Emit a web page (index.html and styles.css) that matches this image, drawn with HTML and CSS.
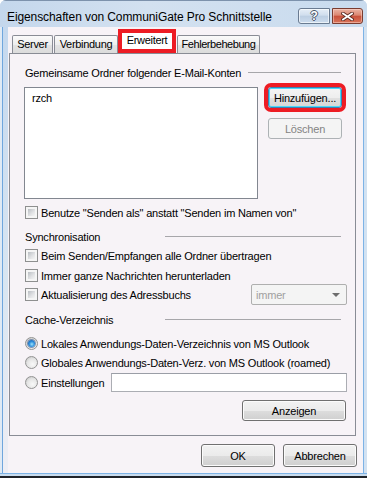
FILE: index.html
```html
<!DOCTYPE html>
<html>
<head>
<meta charset="utf-8">
<title>Eigenschaften</title>
<link rel="stylesheet" href="styles.css">
</head>
<body>
<div class="window">
  <div class="titlebar">
    <div class="title">Eigenschaften von CommuniGate Pro Schnittstelle</div>
    <div class="caption">
      <div class="cap help"><span class="qm">?</span></div>
      <div class="cap close">
        <svg width="13" height="9" viewBox="0 0 13 9">
          <path d="M2 1.5 L11 7.5 M11 1.5 L2 7.5" stroke="#5a2a22" stroke-width="3.6" stroke-linecap="square" fill="none"/>
          <path d="M2 1.5 L11 7.5 M11 1.5 L2 7.5" stroke="#ffffff" stroke-width="1.8" stroke-linecap="square" fill="none"/>
        </svg>
      </div>
    </div>
  </div>
  <div class="middle">
    <div class="lframe"></div>
    <div class="client">
      <div class="tabs">
        <div class="tab t-server">Server</div>
        <div class="tab t-verb">Verbindung</div>
        <div class="tab active">Erweitert</div>
        <div class="tab t-fehler">Fehlerbehebung</div>
      </div>
      <div class="panel">
        <div class="group g1"><span class="glabel">Gemeinsame Ordner folgender E-Mail-Konten</span><span class="gline"></span></div>
        <div class="listrow">
          <div class="listbox"><div class="item">rzch</div></div>
          <div class="sidebtns">
            <button class="btn focus">Hinzufügen...</button>
            <button class="btn disabled">Löschen</button>
          </div>
        </div>
        <div class="row r-benutze"><span class="cb"></span><span>Benutze "Senden als" anstatt "Senden im Namen von"</span></div>
        <div class="group g-sync"><span class="glabel fixed">Synchronisation</span><span class="gline"></span></div>
        <div class="row r-c1"><span class="cb"></span><span>Beim Senden/Empfangen alle Ordner übertragen</span></div>
        <div class="row r-c2"><span class="cb"></span><span>Immer ganze Nachrichten herunterladen</span></div>
        <div class="row r-c3"><span class="cb"></span><span class="grow">Aktualisierung des Adressbuchs</span>
          <div class="combo"><span>immer</span><span class="arrow"></span></div>
        </div>
        <div class="group g-cache"><span class="glabel fixed">Cache-Verzeichnis</span><span class="gline"></span></div>
        <div class="row r-r1"><span class="rb checked"></span><span>Lokales Anwendungs-Daten-Verzeichnis von MS Outlook</span></div>
        <div class="row r-r2"><span class="rb"></span><span>Globales Anwendungs-Daten-Verz. von MS Outlook (roamed)</span></div>
        <div class="row r-r3"><span class="rb"></span><span class="einst">Einstellungen</span><div class="textbox"></div></div>
        <div class="row r-show"><button class="btn anzeigen">Anzeigen</button></div>
      </div>
      <div class="footer">
        <button class="btn fbtn">OK</button>
        <button class="btn fbtn">Abbrechen</button>
      </div>
    </div>
    <div class="rframe"></div>
  </div>
  <div class="bframe"></div>
</div>
</body>
</html>
```
FILE: styles.css
```css
html, body {
  margin: 0;
  padding: 0;
  background: #ffffff;
}
body {
  font-family: "Liberation Sans", Arial, sans-serif;
  font-size: 11px;
  letter-spacing: -0.2px;
  color: #000;
}
.window {
  width: 367px;
  height: 478px;
  display: flex;
  flex-direction: column;
  box-sizing: border-box;
  background: #c9dbee;
  border-radius: 6px 6px 0 0;
  overflow: hidden;
}
.titlebar {
  height: 27px;
  flex: none;
  display: flex;
  justify-content: space-between;
  background: linear-gradient(90deg, #c4d7ec 0%, #d3e1f0 40%, #c9dbee 100%);
  border-top: 1px solid #7d92ac;
  box-sizing: border-box;
}
.title {
  font-size: 12px;
  letter-spacing: -0.1px;
  padding: 9px 0 0 7px;
  line-height: 14px;
}
.caption {
  display: flex;
  gap: 2px;
  padding-top: 7px;
  padding-right: 4px;
}
.cap {
  box-sizing: border-box;
  height: 16px;
  border: 1px solid #6a7b91;
  display: flex;
  align-items: center;
  justify-content: center;
}
.help {
  width: 32px;
  border-radius: 3px 0 0 3px;
  background: linear-gradient(#e6eef7 0%, #d0dded 45%, #bccee2 50%, #cddcee 100%);
  box-shadow: inset 0 0 0 1px rgba(255,255,255,0.6);
}
.qm {
  font-family: "Liberation Sans", Arial, sans-serif;
  font-weight: bold;
  font-size: 12px;
  color: #fff;
  text-shadow: -1px 0 0 #4a5668, 1px 0 0 #4a5668, 0 -1px 0 #4a5668, 0 1px 0 #4a5668;
  line-height: 12px;
}
.close {
  width: 31px;
  border-color: #7a3c30;
  border-radius: 0 3px 3px 0;
  background: linear-gradient(#eab3a4 0%, #db8670 45%, #c8503a 50%, #d9745a 100%);
  box-shadow: inset 0 0 0 1px rgba(255,220,210,0.5);
}
.middle {
  flex: 1;
  display: flex;
  min-height: 0;
}
.lframe {
  width: 8px;
  flex: none;
  box-sizing: border-box;
  border-left: 2px solid #dfeaf5;
  background: linear-gradient(#c4d8ee, #d9e6f2 60%, #eeeef4 100%);
  box-shadow: inset 1px 0 0 #6fa6dd;
}
.rframe {
  width: 4px;
  flex: none;
  background: linear-gradient(90deg, #7db3e6 0 1px, #d2e2f2 1px);
}
.bframe {
  height: 5px;
  flex: none;
  background: linear-gradient(#7db3e6 0 1px, #c8dcef 1px 3px, #20242a 3px);
}
.client {
  flex: 1;
  background: #f7f3f7;
  display: flex;
  flex-direction: column;
  padding: 2px 0 0 1px;
  box-sizing: border-box;
}
.tabs {
  height: 24px;
  display: flex;
  align-items: flex-end;
  padding-left: 3px;
}
.tab {
  box-sizing: border-box;
  height: 18px;
  padding: 0;
  text-align: center;
  letter-spacing: -0.3px;
  border: 1px solid #898c95;
  border-bottom: none;
  border-radius: 2px 2px 0 0;
  background: linear-gradient(#fafafa 0%, #eeeeee 50%, #e3e3e3 51%, #dcdcdc 100%);
  line-height: 17px;
}
.t-server { width: 41px; }
.t-verb { width: 64px; margin-left: 1px; }
.t-fehler { width: 83px; margin-left: 1px; letter-spacing: -0.45px; }
.tab.active {
  width: 58px;
  height: 24px;
  border: 4px solid #ed1c24;
  border-radius: 0;
  background: #ffffff;
  line-height: 14px;
  margin-left: 0;
}
.panel {
  width: 347px;
  height: 383px;
  box-sizing: border-box;
  border: 1px solid #898c95;
  padding: 0 11px 0 15px;
  display: flex;
  flex-direction: column;
}
.group {
  height: 17px;
  display: flex;
  align-items: center;
}
.glabel.fixed {
  width: 140px;
  flex: none;
}
.gline {
  flex: 1;
  height: 1px;
  background: #a7a6aa;
  margin-right: 3px;
}
.g1 { margin-top: 10px; }
.g1 .gline { margin-left: 7px; }
.listrow {
  margin-top: 6px;
  display: flex;
  gap: 10px;
}
.listbox {
  width: 234px;
  height: 112px;
  box-sizing: border-box;
  margin-left: -1px;
  border: 1px solid #828790;
  background: #ffffff;
  padding: 3px 0 0 7px;
}
.item { line-height: 14px; }
.sidebtns {
  display: flex;
  flex-direction: column;
  gap: 10px;
}
.btn {
  font-family: "Liberation Sans", Arial, sans-serif;
  font-size: 11px;
  letter-spacing: -0.2px;
  color: #000;
  box-sizing: border-box;
  width: 74px;
  height: 21px;
  padding: 0;
  border: 1px solid #707070;
  border-radius: 3px;
  background: linear-gradient(#f2f2f2 0%, #ebebeb 50%, #dddddd 51%, #cfcfcf 100%);
  box-shadow: inset 0 0 0 1px #fbfbfb;
}
.btn.focus {
  border-color: #3c7fb1;
  box-shadow: inset 0 0 0 1px #48d8fb;
  outline: 4px solid #ed1c24;
  background: linear-gradient(#f4f4f4 0%, #eeeeee 50%, #e1e1e1 51%, #d6d6d6 100%);
}
.btn.disabled {
  border-color: #adb2b5;
  background: #f4f4f4;
  color: #838383;
  box-shadow: none;
}
.row {
  height: 17px;
  display: flex;
  align-items: center;
}
.cb {
  box-sizing: border-box;
  width: 13px;
  height: 13px;
  flex: none;
  margin-right: 3px;
  border: 1px solid #8e8f8f;
  padding: 2px;
  background: linear-gradient(135deg, #babec3 0%, #e2e3e5 60%, #f4f4f4 100%) content-box, #f5f5f5;
}
.rb {
  box-sizing: border-box;
  width: 13px;
  height: 13px;
  flex: none;
  margin-right: 3px;
  border-radius: 50%;
  border: 1px solid #939393;
  background: radial-gradient(circle at 60% 65%, #f8f8f8 0%, #e4e4e4 55%, #b9b9b9 100%);
  position: relative;
}
.rb.checked::after {
  content: "";
  position: absolute;
  left: 2px;
  top: 2px;
  width: 7px;
  height: 7px;
  border-radius: 50%;
  background: radial-gradient(circle at 55% 60%, #9fe4fb 0%, #2e8fdc 45%, #0b4a9a 100%);
  box-shadow: 0 0 0 1px rgba(20,60,120,0.5);
}
.r-benutze { margin-top: 5px; }
.g-sync { margin-top: 7px; }
.r-c1 { margin-top: 2px; }
.r-c2 { margin-top: 3px; }
.r-c3 { margin-top: 0; height: 21px; }
.grow { flex: 1; }
.combo {
  box-sizing: border-box;
  width: 96px;
  height: 21px;
  margin-right: -3px;
  border: 1px solid #afafaf;
  border-radius: 2px;
  background: #f4f4f4;
  color: #a0a0a0;
  display: flex;
  align-items: center;
  justify-content: space-between;
  padding: 0 6px 0 4px;
}
.arrow {
  width: 0;
  height: 0;
  border-left: 4px solid transparent;
  border-right: 4px solid transparent;
  border-top: 4px solid #6d6d6d;
}
.g-cache { margin-top: 6px; }
.r-r1 { margin-top: 7px; }
.r-r2 { margin-top: 2px; }
.r-r3 { margin-top: 2px; height: 19px; }
.einst { margin-right: 7px; }
.textbox {
  box-sizing: border-box;
  width: 236px;
  height: 19px;
  margin-right: -3px;
  border: 1px solid #abadb3;
  border-top-color: #9a9ea6;
  background: #ffffff;
}
.r-show {
  margin-top: 8px;
  height: 21px;
  justify-content: flex-end;
}
.btn.anzeigen {
  width: 104px;
  margin-right: -2px;
}
.footer {
  display: flex;
  justify-content: flex-end;
  gap: 8px;
  padding: 8px 6px 0 0;
}
.fbtn {
  width: 74px;
  height: 23px;
}
```
